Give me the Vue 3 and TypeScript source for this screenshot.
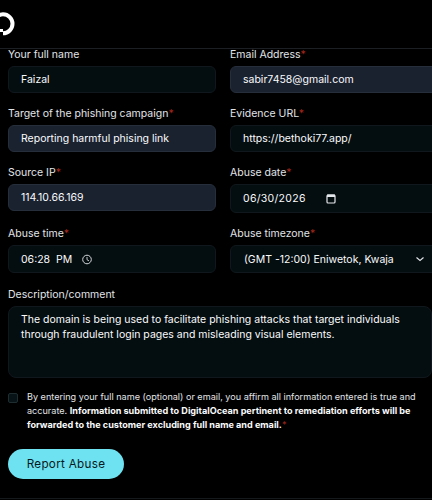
<script setup lang="ts">
interface Field {
  label: string
  required: boolean
  value: string
  filled: boolean
}
const topFields: Field[] = [
  { label: 'Your full name', required: false, value: 'Faizal', filled: false },
  { label: 'Email Address', required: true, value: 'sabir7458@gmail.com', filled: true },
  { label: 'Target of the phishing campaign', required: true, value: 'Reporting harmful phising link', filled: true },
  { label: 'Evidence URL', required: true, value: 'https://bethoki77.app/', filled: false },
]
</script>

<template>
  <div class="page">
    <header class="header">
      <svg class="logo" width="30" height="48" viewBox="0 0 30 48" aria-hidden="true">
        <path d="M3 33.300 A9.500 9.500 0 1 0 -6.500 23.800" fill="none" stroke="#fff" stroke-width="4" />
        <rect x="-1" y="29" width="4" height="3" fill="#fff" />
      </svg>
    </header>
    <form class="form">
      <div v-for="f in topFields" :key="f.label" class="field">
        <label class="label">{{ f.label }}<span v-if="f.required" class="req">*</span></label>
        <div class="control" :class="{ filled: f.filled }">{{ f.value }}</div>
      </div>

      <div class="field">
        <label class="label">Source IP<span class="req">*</span></label>
        <div class="control filled">114.10.66.169</div>
      </div>
      <div class="field">
        <label class="label">Abuse date<span class="req">*</span></label>
        <div class="control date">
          <span class="spaced">06/30/2026</span>
          <svg class="cal" width="14" height="14" viewBox="0 0 14 14" aria-hidden="true">
            <rect x="3" y="3" width="8" height="8" rx="1" fill="none" stroke="#e4e8ec" stroke-width="1.200" />
            <rect x="3" y="2.500" width="8" height="2.500" fill="#e4e8ec" />
          </svg>
        </div>
      </div>
      <div class="field last-row">
        <label class="label">Abuse time<span class="req">*</span></label>
        <div class="control picker">
          <span>06:28&nbsp; PM</span>
          <svg class="clock" width="14" height="14" viewBox="0 0 14 14" aria-hidden="true">
            <circle cx="7" cy="7.500" r="4.300" fill="none" stroke="#d4d8dc" stroke-width="1" />
            <path d="M7 5 V7.700 L9 8.900" fill="none" stroke="#d4d8dc" stroke-width="0.900" />
          </svg>
        </div>
      </div>
      <div class="field last-row">
        <label class="label">Abuse timezone<span class="req">*</span></label>
        <div class="control picker select">
          <span>(GMT -12:00) Eniwetok, Kwaja</span>
          <svg class="chev" width="10" height="10" viewBox="0 0 10 10" aria-hidden="true">
            <path d="M1.500 3.500 L5 6.500 L8.500 3.500" fill="none" stroke="#e4e8ec" stroke-width="1.100" />
          </svg>
        </div>
      </div>

      <div class="field wide">
        <label class="label">Description/comment</label>
        <div class="control area">The domain is being used to facilitate phishing attacks that target individuals through fraudulent login pages and misleading visual elements.</div>
      </div>

      <div class="consent wide">
        <span class="check"></span>
        <p class="legal">By entering your full name (optional) or email, you affirm all information entered is true and accurate. <strong>Information submitted to DigitalOcean pertinent to remediation efforts will be forwarded to the customer excluding full name and email.</strong><span class="req">*</span></p>
      </div>

      <button type="button" class="submit wide">Report Abuse</button>
    </form>
    <div class="foot"></div>
  </div>
</template>

<style scoped>
.page {
  width: 432px;
  height: 500px;
  overflow: hidden;
  background: #000;
  color: #e6eaee;
  font-family: Inter, "Liberation Sans", sans-serif;
}
.header {
  height: 48px;
  border-bottom: 1px solid #1c2024;
}
.logo {
  display: block;
}
.form {
  display: grid;
  grid-template-columns: 208px 208px;
  column-gap: 14px;
  padding-left: 8px;
  align-items: start;
}
.field {
  display: flex;
  flex-direction: column;
  margin-bottom: 15px;
}
.last-row {
  margin-bottom: 16px;
}
.wide {
  grid-column: 1 / span 2;
}
.label {
  font-size: 10.500px;
  line-height: 11px;
  margin-bottom: 6px;
  color: #e2e5e8;
}
.req {
  color: #a5281c;
}
.control {
  height: 27px;
  box-sizing: border-box;
  border: 1px solid #10181d;
  border-radius: 6px;
  background: #040d10;
  padding: 0 12px;
  display: flex;
  align-items: center;
  font-size: 10.500px;
  color: #fafbfc;
  white-space: nowrap;
}
.control.filled {
  background: #1a2230;
  border-color: #262e3b;
}
.date {
  height: 29px;
}
.picker {
  height: 28px;
}
.cal {
  margin-left: 18px;
}
.clock {
  margin-left: 8px;
}
.spaced {
  letter-spacing: 0.3px;
}
.select {
  justify-content: space-between;
  padding: 0 12px 0 13px;
}
.area {
  height: 72px;
  display: block;
  white-space: normal;
  padding: 5px 12px;
  line-height: 15px;
  width: 424px;
  border-radius: 8px;
}
.consent {
  display: flex;
  gap: 9px;
  width: 424px;
}
.check {
  flex: none;
  box-sizing: border-box;
  width: 10px;
  height: 10px;
  border: 1px solid #1f2c30;
  border-radius: 2px;
  background: #071317;
}
.legal {
  margin: -3px 0 0;
  font-size: 9.100px;
  line-height: 14px;
  color: #e2e5e8;
}
.legal strong {
  font-weight: 700;
  color: #fafbfc;
}
.submit {
  justify-self: start;
  width: 116px;
  height: 30px;
  margin-top: 17px;
  border: none;
  border-radius: 15px;
  background: #6ee2f0;
  color: #0b1a22;
  font-family: inherit;
  font-size: 11.700px;
  letter-spacing: 0.3px;
}
.foot {
  margin-top: 19px;
  border-top: 1px solid #15191c;
}
</style>
